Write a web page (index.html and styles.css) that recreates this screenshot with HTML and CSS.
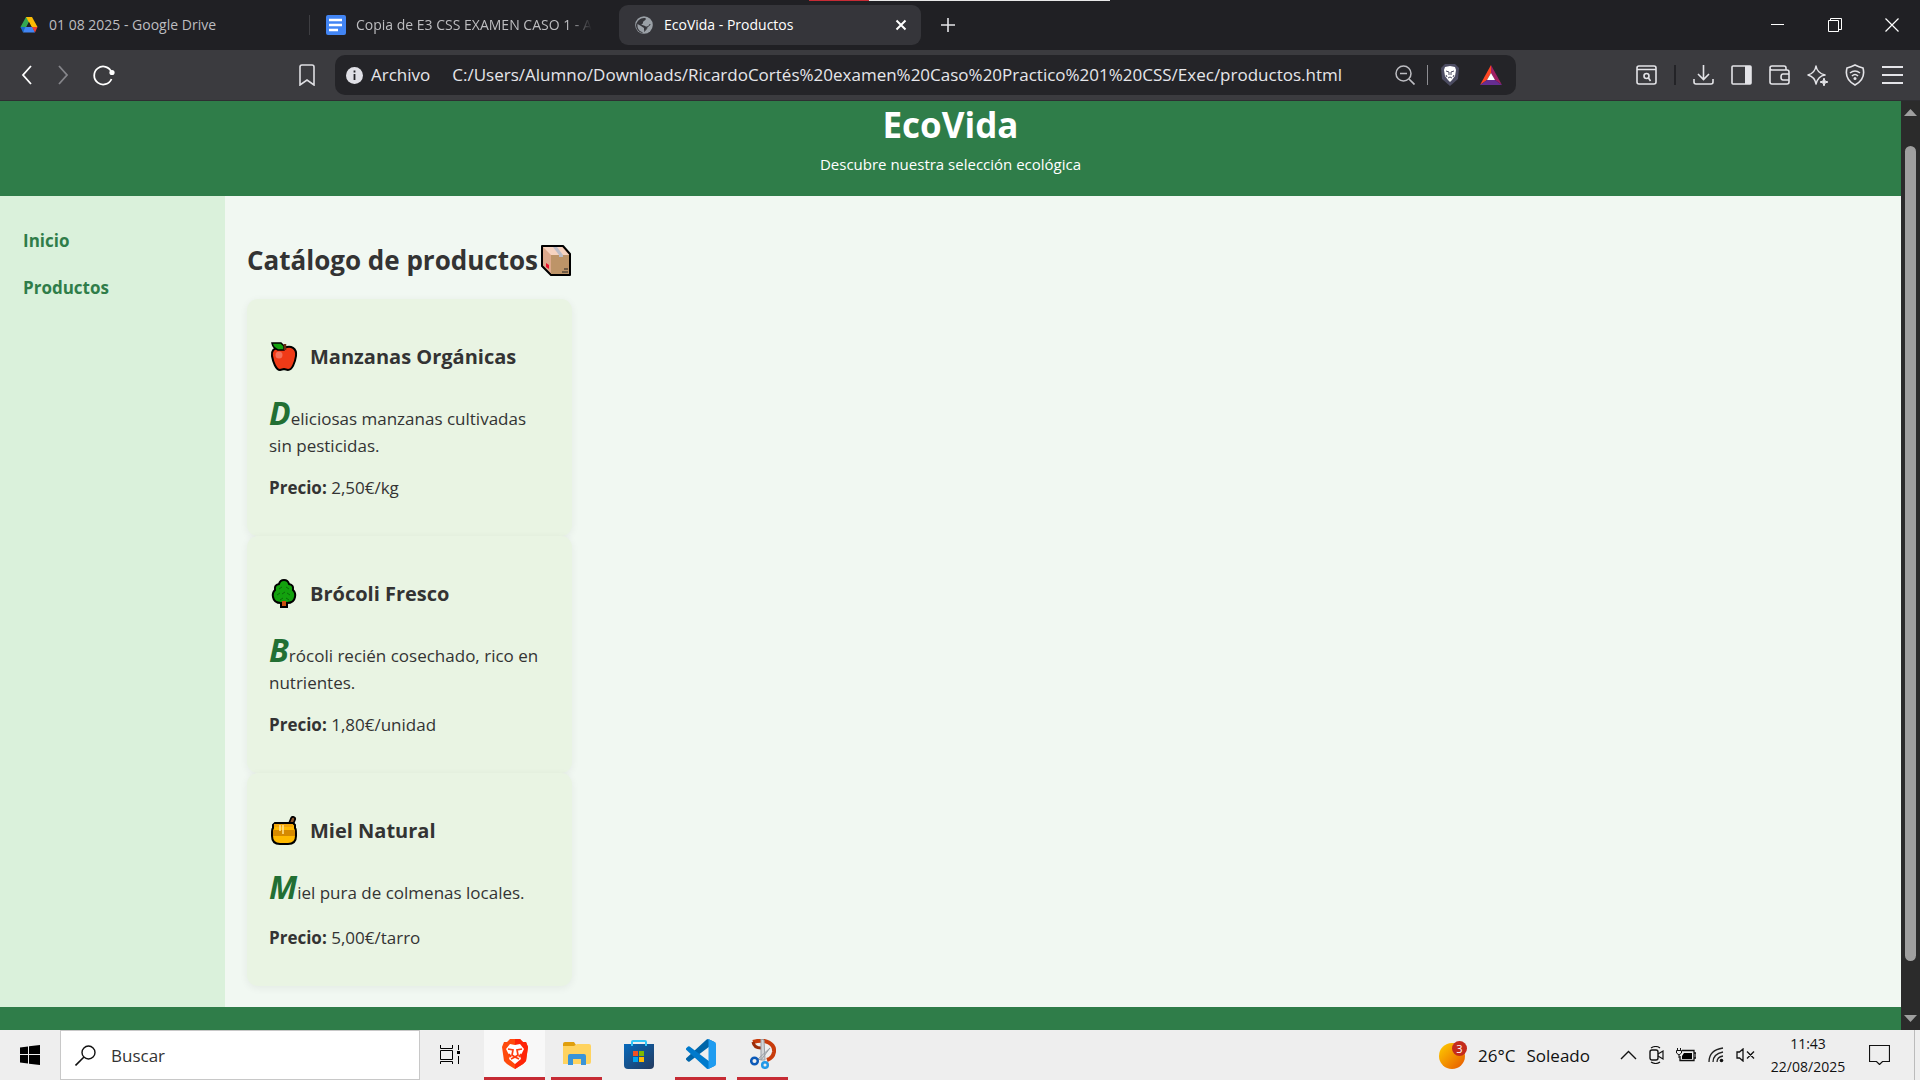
FILE: index.html
```html
<!DOCTYPE html>
<html lang="es">
<head>
<meta charset="utf-8">
<title>EcoVida - Productos</title>
<link rel="stylesheet" href="styles.css">
</head>
<body>
<div class="desktop">
  <header class="tabstrip">
    <div class="loadbar"></div>
    <button class="tab tab-drive">
      <svg width="18" height="18" viewBox="0 0 18 18"><path d="M6 1h6l-3 5-5 10L0.500 11z" fill="#34a853"/><path d="M6 1h6l5.500 10h-6z" fill="#fbbc04"/><path d="M.5 11h5L3 16.500z" fill="#1967d2"/><path d="M5.500 11h7l2.500 5.500H3z" fill="#4285f4"/><path d="M12 11h5.500L15 16.500z" fill="#ea4335"/><path d="M9 6l2.700 5H6.300z" fill="#202024"/></svg>
      <span class="tab-title">01 08 2025 - Google Drive</span>
    </button>
    <button class="tab tab-docs">
      <svg width="20" height="20" viewBox="0 0 20 20"><rect width="20" height="20" rx="2" fill="#4285f4"/><path d="M3 5h13M3 10h13M3 15h9" stroke="#fff" stroke-width="2.400"/></svg>
      <span class="tab-title tab-fade">Copia de E3 CSS EXAMEN CASO 1 - A</span>
    </button>
    <div class="tab tab-active">
      <svg width="18" height="18" viewBox="0 0 18 18"><circle cx="9" cy="9" r="8.800" fill="#9aa0a6"/><path d="M9 2c3 0 2 2 0 3s0 2-2 3 2 1 3 2 2 0 2 1-1 3-3 4v-3c-1-1-2-1-3-2L2.500 8C2.500 10 2 14 7 16l1 1c-4 0-7-4-7-8 1-4 4-7 8-7z" fill="#35353a"/><path d="M9 15.500c1-1 3-2 3-4.500 1-1 3-1 3-3" fill="none" stroke="#35353a"/></svg>
      <span class="tab-title">EcoVida - Productos</span>
      <button class="tab-close" aria-label="Cerrar pestaña"><svg width="12" height="12" viewBox="0 0 12 12"><path d="M1.500 1.500l9 9M10.500 1.500l-9 9" stroke="#fff" stroke-width="2"/></svg></button>
    </div>
    <button class="new-tab" aria-label="Nueva pestaña"><svg width="14" height="14" viewBox="0 0 14 14"><path d="M7 0v14M0 7h14" stroke="#e3e3e6" stroke-width="1.600"/></svg></button>
    <div class="window-controls">
      <button aria-label="Minimizar"><svg width="14" height="14" viewBox="0 0 14 14"><path d="M0 6.500h13" stroke="#fff"/></svg></button>
      <button aria-label="Restaurar"><svg width="14" height="14" viewBox="0 0 14 14"><path d="M.5 2.500h10v11H.5zM2.500 2.500v-2h11v11h-3" fill="none" stroke="#fff"/></svg></button>
      <button aria-label="Cerrar"><svg width="14" height="14" viewBox="0 0 14 14"><path d="M.5.5l13 13M13.500.5l-13 13" stroke="#fff" stroke-width="1.200"/></svg></button>
    </div>
  </header>

  <nav class="toolbar" aria-label="Navegador">
    <div class="nav-buttons">
      <button aria-label="Atrás"><svg width="12" height="20" viewBox="0 0 12 20"><path d="M10 1L2 10l8 9" fill="none" stroke="#fff" stroke-width="1.800"/></svg></button>
      <button aria-label="Adelante"><svg width="12" height="20" viewBox="0 0 12 20"><path d="M2 1l8 9-8 9" fill="none" stroke="#85858a" stroke-width="1.800"/></svg></button>
      <button aria-label="Recargar"><svg width="22" height="22" viewBox="0 0 22 22"><path d="M18.500 8A9 9 0 1 0 18.500 15" fill="none" stroke="#fff" stroke-width="1.800"/><circle cx="19" cy="8.500" r="2.600" fill="#fff"/></svg></button>
    </div>
    <button class="bookmark" aria-label="Marcador"><svg width="16" height="22" viewBox="0 0 16 22"><path d="M1 3q0-2 2-2h10q2 0 2 2v18l-7-5-7 5z" fill="none" stroke="#dedee2" stroke-width="1.600"/></svg></button>
    <div class="address">
      <svg width="17" height="17" viewBox="0 0 17 17"><circle cx="8.500" cy="8.500" r="8.500" fill="#e0e0e6"/><path d="M8.500 7v6M8.500 3.500v2" stroke="#242428" stroke-width="1.800"/></svg>
      <span class="scheme">Archivo</span>
      <input class="url" aria-label="Dirección" value="C:/Users/Alumno/Downloads/RicardoCortés%20examen%20Caso%20Practico%201%20CSS/Exec/productos.html">
      <button aria-label="Zoom"><svg width="20" height="20" viewBox="0 0 20 20"><circle cx="8.500" cy="8.500" r="7.500" fill="none" stroke="#bdbdc2" stroke-width="1.500"/><path d="M14 14l5.500 5.500M5 8.500h7" stroke="#bdbdc2" stroke-width="1.700"/></svg></button>
      <span class="address-sep"></span>
      <button aria-label="Brave Shields"><svg width="20" height="22" viewBox="0 0 20 22"><path d="M5 0h10l4 4-1 11-8 7-8-7L1 4z" fill="#4c4c62"/><path d="M5 3l5-1 5 1 1 3-1 6-3 4-2 2-2-2-3-4-1-6z" fill="#fff"/><path d="M6 7l3 1v3M14 7l-3 1v3M8 14l2-1 2 1M6 11l1 2M14 11l-1 2" fill="none" stroke="#4c4c62" stroke-width="1"/></svg></button>
      <button class="rewards" aria-label="Brave Rewards"><svg width="22" height="20" viewBox="0 0 22 20"><path d="M11 0L0 20l7-5 4-7z" fill="#ff4724"/><path d="M11 0l11 20-7-5-4-7z" fill="#9e1f63"/><path d="M0 20h22l-7-5H7z" fill="#662d91"/><path d="M11 8l4 7H7z" fill="#fff"/></svg></button>
    </div>
    <div class="toolbar-actions">
      <button aria-label="Buscar en la página"><svg width="21" height="20" viewBox="0 0 21 20"><rect x="1" y="1" width="19" height="18" rx="2" fill="none" stroke="#e4e4e8" stroke-width="1.600"/><path d="M1 4.500h19" stroke="#e4e4e8" stroke-width="1.500"/><circle cx="10.500" cy="11" r="2.500" fill="none" stroke="#e4e4e8" stroke-width="1.600"/><path d="M12.500 13l2 3" stroke="#e4e4e8" stroke-width="1.600"/></svg></button>
      <span class="actions-sep"></span>
      <button aria-label="Descargas"><svg width="21" height="20" viewBox="0 0 21 20"><path d="M10.500 0v14M5 9l5.500 5.500L16 9M1 14v3q0 2 2 2h15q2 0 2-2v-3" fill="none" stroke="#e4e4e8" stroke-width="1.600"/></svg></button>
      <button aria-label="Barra lateral"><svg width="21" height="20" viewBox="0 0 21 20"><rect x="1" y="1" width="19" height="18" rx="1" fill="none" stroke="#e4e4e8" stroke-width="1.600"/><path d="M14 1h6v18h-6z" fill="#e4e4e8"/></svg></button>
      <button aria-label="Cartera"><svg width="21" height="20" viewBox="0 0 21 20"><path d="M1 4v13q0 2 2 2h15q2 0 2-2V7q0-2-2-2H3Q1 5 1 3t2-2h12q2 0 2 2v2M20 9h-6q-2 0-2 3t2 3h6" fill="none" stroke="#e4e4e8" stroke-width="1.600"/></svg></button>
      <button aria-label="Leo"><svg width="21" height="21" viewBox="0 0 21 21"><path d="M9 1q1 7 9 9-7 1-9 9-1-7-8-9 7-2 8-9z" fill="none" stroke="#e4e4e8" stroke-width="1.500" stroke-linejoin="round"/><path d="M17 13v8M13 17h8" stroke="#3b3b3f" stroke-width="5"/><path d="M17 13q0 4 4 4-4 0-4 4 0-4-4-4 4 0 4-4z" fill="#e4e4e8" stroke="#e4e4e8"/></svg></button>
      <button aria-label="VPN"><svg width="20" height="22" viewBox="0 0 20 22"><path d="M10 1q4 2 8 3 3 11-8 17Q-1 15 2 4q4-1 8-3z" fill="none" stroke="#e4e4e8" stroke-width="1.600"/><path d="M5 9q5-4 10 0M7 12q3-3 6 0" fill="none" stroke="#e4e4e8" stroke-width="1.600"/><circle cx="10" cy="14.500" r="1.500" fill="#e4e4e8"/></svg></button>
      <button aria-label="Menú"><svg width="21" height="20" viewBox="0 0 21 20"><path d="M0 2h21M0 10h21M0 18h21" stroke="#e4e4e8" stroke-width="1.800"/></svg></button>
    </div>
  </nav>

  <div class="viewport">
    <div class="site">
      <div class="site-header">
        <h1>EcoVida</h1>
        <p>Descubre nuestra selección ecológica</p>
      </div>
      <div class="site-body">
        <nav class="sidebar" aria-label="Principal">
          <a href="#inicio">Inicio</a>
          <a href="#productos">Productos</a>
        </nav>
        <main class="catalog">
          <h2>Catálogo de productos<svg width="30" height="31" viewBox="0 0 30 31"><path d="M1 1h21l7 8v21H10L1 21z" fill="#dca98c" stroke="#000" stroke-width="2" stroke-linejoin="round"/><path d="M2 2h19l7 8H10z" fill="#f6d3c0"/><path d="M10 10h18v19H10z" fill="#bd9468"/><path d="M12 2h4l6 8v2h-4v-2z" fill="#bcbcc6"/><path d="M5 18l3 2v4l-3-2z" fill="#e8112d"/><path d="M23 24h4M21 27h6" stroke="#222" stroke-width="1"/></svg></h2>
          <article class="card">
            <h3><svg width="30" height="30" viewBox="0 0 30 30"><path d="M15 6c7-3 13 0 12 8-1 7-4 14-8 14l-4-1-4 1C7 28 4 20 3 14 2 9 5 6 9 6z" fill="#f03a17" stroke="#000" stroke-width="2"/><path d="M3 1h9l3 3v4H9Q4 6 3 1z" fill="#13a10e" stroke="#000" stroke-width="1.500"/><path d="M16 2v6" stroke="#6b2a12" stroke-width="2.500"/><circle cx="10" cy="13" r="3.500" fill="#f4705a"/></svg><span>Manzanas Orgánicas</span></h3>
            <p class="description">Deliciosas manzanas cultivadas sin pesticidas.</p>
            <p><strong>Precio:</strong> 2,50€/kg</p>
          </article>
          <article class="card">
            <h3><svg width="30" height="30" viewBox="0 0 30 30"><path d="M12 22h6v6h-6z" fill="#ca5010" stroke="#000" stroke-width="2"/><path d="M15 1q4 0 5 4 5 1 4 6 3 3 2 7-1 6-8 6h-6q-7 0-8-6-1-4 2-7-1-5 4-6 1-4 5-4z" fill="#13a10e" stroke="#000" stroke-width="2"/><path d="M13 22h4v5h-4z" fill="#ca5010"/><path d="M10 10l3-2M17 8l3 2M8 16l3-2M13 15l3-2M18 14l3 2M11 21l3-2M17 19l3 2" stroke="#0b6a0b"/></svg><span>Brócoli Fresco</span></h3>
            <p class="description">Brócoli recién cosechado, rico en nutrientes.</p>
            <p><strong>Precio:</strong> 1,80€/unidad</p>
          </article>
          <article class="card">
            <h3><svg width="30" height="30" viewBox="0 0 30 30"><path d="M22 8l2-5" stroke="#000" stroke-width="6" stroke-linecap="round"/><path d="M22 8l2-5" stroke="#8e562e" stroke-width="2.500" stroke-linecap="round"/><path d="M6 7h18l2 2v3q1 1 1 5v3q0 8-8 8h-8q-8 0-8-8v-3q0-4 1-5V9z" fill="#ffb900" stroke="#000" stroke-width="2"/><path d="M4 14h22v6H4z" fill="#d68a00"/><path d="M5 8h19v3H5z" fill="#f0a50a"/><path d="M11 9v6M14 9v9" stroke="#ffdf8a" stroke-width="1.600"/></svg><span>Miel Natural</span></h3>
            <p class="description">Miel pura de colmenas locales.</p>
            <p><strong>Precio:</strong> 5,00€/tarro</p>
          </article>
        </main>
      </div>
      <div class="site-footer"></div>
    </div>
    <div class="scrollbar">
      <svg width="13" height="7" viewBox="0 0 13 7"><path d="M0 7l6.500-7L13 7z" fill="#9f9f9f"/></svg>
      <div class="thumb"></div>
      <svg width="13" height="7" viewBox="0 0 13 7"><path d="M0 0l6.500 7L13 0z" fill="#9f9f9f"/></svg>
    </div>
  </div>

  <footer class="taskbar">
    <button class="start" aria-label="Inicio"><svg width="20" height="20" viewBox="0 0 20 20"><path d="M0 2.500l8-1V9H0zM9 1.300L20 0v9H9zM0 10h8v8.500l-8-1zM9 10h11v10L9 18.700z" fill="#000"/></svg></button>
    <label class="search">
      <svg width="21" height="21" viewBox="0 0 21 21"><circle cx="13.500" cy="7.500" r="6.500" fill="none" stroke="#111" stroke-width="1.400"/><path d="M9 12L.5 20.500" stroke="#111" stroke-width="1.600"/></svg>
      <input type="text" placeholder="Buscar" aria-label="Buscar">
    </label>
    <button class="task-view" aria-label="Vista de tareas"><svg width="20" height="20" viewBox="0 0 20 20"><path d="M.5 5.500h12v9H.5zM.5 0v3.500h12V0M.5 19v-2.500h12V19M18.500 0v5M18.500 11v8" fill="none" stroke="#000"/><path d="M17 6h3v3h-3z" fill="#000"/></svg></button>
    <div class="apps">
      <button class="app-current" aria-label="Brave"><svg width="26" height="30" viewBox="0 0 26 30"><path d="M8 0h10l3 3h3l2 5-2 14-3 3-8 5-8-5-3-3L0 8l2-5h3z" fill="#ff4a0c"/><path d="M13 0h5l3 3h3l2 5-2 14-3 3-8 5z" fill="#ff2408"/><path d="M8 5l5 1 5-1 4 5-2 4-2 3 1 3-6 5-6-5 1-3-2-3-2-4z" fill="#fff"/><path d="M6 10l5 1-1 5 3 2 3-2-1-5 5-1M9 20l4-2 4 2M7 15l2 3M19 15l-2 3" fill="none" stroke="#ff3a0c" stroke-width="1.700"/></svg></button>
      <button class="app app-open" aria-label="Explorador"><svg width="28" height="24" viewBox="0 0 28 24"><path d="M0 2q0-2 2-2h9l2 3v4H0z" fill="#e09f0c"/><path d="M0 4h11l3-2h12q2 0 2 2v16q0 2-2 2H0z" fill="#ffd35f"/><path d="M5 23V14q0-2 2-2h14q2 0 2 2v9h-5v-6h-8v6z" fill="#3a94d8"/></svg></button>
      <button class="app" aria-label="Store"><svg width="30" height="30" viewBox="0 0 30 30"><defs><linearGradient id="store" x1="0" y1="0" x2="1" y2="1"><stop stop-color="#0669bc"/><stop offset="1" stop-color="#243a5e"/></linearGradient></defs><path d="M0 5h30v21q0 4-4 4H4q-4 0-4-4z" fill="url(#store)"/><path d="M8 7V3q0-1 1-1h12q1 0 1 1v4" fill="none" stroke="#32c5f7" stroke-width="2"/><path d="M9 12h5v5H9z" fill="#f25022"/><path d="M15 12h5v5h-5z" fill="#7fba00"/><path d="M9 18h5v5H9z" fill="#00a4ef"/><path d="M15 18h5v5h-5z" fill="#ffb900"/></svg></button>
      <button class="app app-open" aria-label="VS Code"><svg width="30" height="30" viewBox="0 0 100 100"><path d="M96.460 10.800L75.860.880a6.230 6.230 0 0 0-7.100 1.200L1.300 63.580a4.160 4.160 0 0 0 0 6.170l5.500 5a4.160 4.160 0 0 0 5.320.240l81.230-61.600c2.720-2.070 6.630-.130 6.630 3.300v-.240a6.250 6.250 0 0 0-3.540-5.630z" fill="#0065a9"/><path d="M96.460 89.200l-20.600 9.920a6.230 6.230 0 0 1-7.100-1.200L1.300 36.420a4.160 4.160 0 0 1 0-6.170l5.500-5a4.160 4.160 0 0 1 5.320-.240l81.230 61.600c2.720 2.070 6.630.130 6.630-3.300v.240a6.250 6.250 0 0 1-3.540 5.630z" fill="#007acc"/><path d="M75.860 99.130a6.230 6.230 0 0 1-7.100-1.200c2.300 2.300 6.240.670 6.240-2.580V4.660c0-3.260-3.940-4.900-6.240-2.590a6.230 6.230 0 0 1 7.100-1.200l20.600 9.900A6.250 6.250 0 0 1 100 16.400v67.200a6.250 6.250 0 0 1-3.540 5.630z" fill="#1f9cf0"/></svg></button>
      <button class="app app-open" aria-label="Recortes"><svg width="26" height="30" viewBox="0 0 26 30"><path d="M3 3C16-1 25 5 24 13q-1 6-7 8" fill="none" stroke="#c83c0c" stroke-width="4"/><path d="M3 3q1 6 8 6" fill="none" stroke="#9c2c08" stroke-width="3"/><path d="M11 0l3 1 1 20h-4zM20 9l-9 12-3-1z" fill="#d2d5d8" stroke="#9aa0a6"/><circle cx="4.500" cy="22" r="3.300" fill="none" stroke="#0b59b8" stroke-width="2.500"/><circle cx="15" cy="26" r="2.800" fill="none" stroke="#2299e8" stroke-width="2.500"/></svg></button>
    </div>
    <div class="tray">
      <button class="weather"><svg width="28" height="28" viewBox="0 0 28 28"><defs><linearGradient id="sun" x1="0" y1="0" x2="1" y2="1"><stop stop-color="#ffd000"/><stop offset="1" stop-color="#e65500"/></linearGradient></defs><circle cx="13" cy="15" r="13" fill="url(#sun)"/><circle cx="20.500" cy="7.500" r="7.500" fill="#c42b1c"/><text x="20.500" y="11.500" text-anchor="middle" class="badge-count">3</text></svg><span>26°C</span><span>Soleado</span></button>
      <div class="tray-icons">
        <svg width="17" height="10" viewBox="0 0 17 10"><path d="M1 9l7.500-7.500L16 9" fill="none" stroke="#111" stroke-width="1.400"/></svg>
        <svg width="15" height="18" viewBox="0 0 15 18"><rect x="1" y="4" width="8" height="10" rx="2" fill="none" stroke="#111" stroke-width="1.400"/><path d="M9 8l5-3v8l-5-3M2 2q5-3 9 0M2 16q5 3 9 0" fill="none" stroke="#111" stroke-width="1.200"/></svg>
        <svg width="20" height="14" viewBox="0 0 20 14"><path d="M6 2.500h12v10H4V8M18 5h2v5h-2" fill="none" stroke="#111" stroke-width="1.300"/><path d="M8 5h8v6H6V8z" fill="#000"/><path d="M1.500 0v2M4.500 0v2" stroke="#111"/><path d="M.5 2.500h5V5L3 7 .5 5zM3 7v3" fill="none" stroke="#111"/></svg>
        <svg width="16" height="16" viewBox="0 0 16 16"><path d="M1 15Q1 3 15 1M5 15Q5 7 15 5M9 15q0-5 6-6" fill="none" stroke="#222" stroke-width="1.300"/><circle cx="13.500" cy="13.500" r="1.800" fill="#111"/></svg>
        <svg width="19" height="14" viewBox="0 0 19 14"><path d="M1 4h2.500L7 1v12l-3.500-3H1zM11 3.500l7 7M18 3.500l-7 7" fill="none" stroke="#111" stroke-width="1.300"/></svg>
      </div>
      <div class="clock"><span>11:43</span><span>22/08/2025</span></div>
      <button class="notifications" aria-label="Notificaciones"><svg width="21" height="20" viewBox="0 0 21 20"><path d="M.5.500h20v16h-7l-3 3-3-3h-7z" fill="none" stroke="#111" stroke-width="1.200"/></svg></button>
      <div class="show-desktop"></div>
    </div>
  </footer>
</div>
</body>
</html>
```
FILE: styles.css
```css
* { box-sizing: border-box; }
body { margin: 0; font-family: "Open Sans", "Noto Sans", sans-serif; }
button { display: flex; align-items: center; justify-content: center; padding: 0; border: 0; background: none; color: inherit; font: inherit; flex-shrink: 0; }
svg { display: block; flex-shrink: 0; }
.desktop { display: flex; flex-direction: column; height: 100vh; overflow: hidden; }

/* Tabs */
.tabstrip { position: relative; display: flex; align-items: center; height: 50px; flex-shrink: 0; background: #202024; color: #bdbdc0; font-size: 14px; }
.loadbar { position: absolute; top: 0; left: 809px; width: 301px; height: 1px; background: linear-gradient(to right, #c62b34 60px, #e8e8e8 60px); }
.tab { display: flex; align-items: center; gap: 11px; height: 40px; white-space: nowrap; }
.tab-drive { width: 310px; height: 20px; padding-left: 20px; justify-content: flex-start; border-right: 1px solid #3e3e42; }
.tab-docs { width: 309px; padding: 0 12px 0 16px; gap: 10px; justify-content: flex-start; }
.tab-fade { overflow: hidden; mask-image: linear-gradient(to right, #000 90%, transparent); }
.tab-active { width: 302px; padding: 0 14px 0 16px; border-radius: 9px; background: #35353a; color: #fff; }
.tab-title { padding-bottom: 1px; }
.tab-close { margin-left: auto; }
.new-tab { margin-left: 20px; }
.window-controls { display: flex; margin-left: auto; }
.window-controls button { width: 57px; height: 48px; }

/* Toolbar */
.toolbar { display: flex; align-items: center; height: 51px; flex-shrink: 0; background: #3b3b3f; border-bottom: 1px solid #2e2e32; color: #e6e6ea; font-size: 17px; }
.nav-buttons { display: flex; align-items: center; gap: 24px; width: 299px; padding-left: 21px; }
.bookmark { margin-right: 20px; }
.address { display: flex; align-items: center; flex: 1; min-width: 0; height: 40px; padding: 0 14px 0 11px; border-radius: 10px; background: #242428; gap: 16px; }
.scheme { margin: 0 6px 0 -8px; padding-bottom: 2px; }
.url { flex: 1; min-width: 0; padding: 0 0 2px; border: 0; outline: 0; background: none; color: inherit; font: inherit; }
.address-sep { width: 1px; height: 20px; margin: 0 -4px; background: #8d8d92; }
.rewards { margin-left: 4px; }
.toolbar-actions { display: flex; align-items: center; gap: 17px; padding: 0 17px 0 120px; }
.actions-sep { width: 2px; height: 20px; background: #232327; }

/* Web page */
.viewport { display: flex; flex: 1; min-height: 0; }
.site { display: flex; flex-direction: column; flex: 1; min-width: 0; background: #f1f8f2; color: #333; font-size: 17px; line-height: 24px; }
.site-header { height: 95px; flex-shrink: 0; background: #2f7d49; color: #fff; text-align: center; font-size: 15px; }
.site-header h1 { margin: 0; font-size: 35px; line-height: 48px; }
.site-header p { margin: 0; line-height: 30px; }
.site-body { display: flex; flex: 1; min-height: 0; }
.sidebar { display: flex; flex-direction: column; gap: 23px; width: 225px; padding: 33px 23px; background: #daf1db; }
.sidebar a { color: #2f7d49; font-weight: 700; text-decoration: none; }
.catalog { padding: 43px 22px 22px; }
.catalog h2 { display: flex; align-items: center; gap: 3px; margin: 0 0 18px; font-size: 26px; line-height: 42px; white-space: nowrap; }
.card { width: 325px; padding: 40px 22px 36px; border-radius: 11px; background: #e9f4e3; box-shadow: 0 2px 9px rgba(0, 0, 0, 0.06); }
.card h3 { display: flex; align-items: center; gap: 11px; margin: 0 0 17px; font-size: 20px; line-height: 36px; }
.card p { margin: 0 0 18px; }
.card p:last-child { margin: 0; }
.description::first-letter { color: #226f33; font-size: 32px; line-height: 42px; font-style: italic; font-weight: 700; }
.site-footer { height: 23px; flex-shrink: 0; background: #2f7d49; }
.scrollbar { display: flex; flex-direction: column; align-items: center; width: 19px; padding: 8px 0; background: #2b2b2b; }
.thumb { flex: 1; width: 11px; margin: 30px 0 54px; border-radius: 6px; background: #9f9f9f; }

/* Taskbar */
.taskbar { display: flex; height: 50px; flex-shrink: 0; background: #eee; color: #111; font-size: 17px; }
.start { width: 60px; }
.search { display: flex; align-items: center; gap: 15px; width: 360px; padding: 0 14px; border: 1px solid #c8c8c8; background: #fff; }
.search input { flex: 1; min-width: 0; padding: 0; border: 0; outline: 0; background: none; font: inherit; }
.search input::placeholder { color: #333; }
.task-view { width: 60px; }
.apps { display: flex; padding-left: 4px; }
.app { width: 51px; margin: 0 5px 0 6px; border-bottom: 3px solid transparent; }
.app-open { border-color: #c62b34; }
.app-current { width: 61px; background: #f8f8f8; border-bottom: 3px solid #c62b34; }
.tray { display: flex; align-items: center; margin-left: auto; }
.weather { gap: 11px; margin-right: 30px; }
.badge-count { fill: #fff; font-size: 11px; }
.tray-icons { display: flex; align-items: center; gap: 12px; }
.clock { display: flex; flex-direction: column; align-items: center; width: 106px; font-size: 14px; line-height: 23px; }
.notifications { margin: 0 24px 0 8px; }
.show-desktop { width: 6px; height: 50px; border-left: 1px solid #bbb; }
```
